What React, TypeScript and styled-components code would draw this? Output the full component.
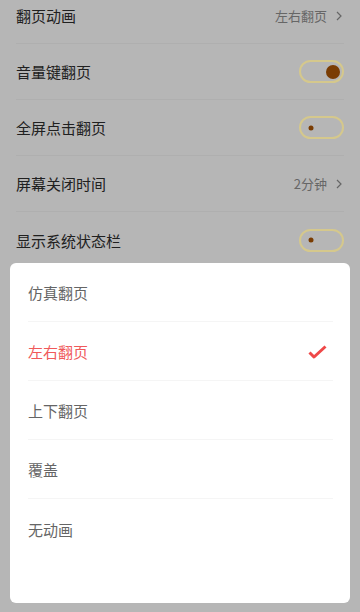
import React from "react";
import styled, { createGlobalStyle } from "styled-components";

const Global = createGlobalStyle`
  html, body { margin: 0; padding: 0; }
  body {
    width: 360px;
    height: 612px;
    overflow: hidden;
    background: #b6b6b6;
    font-family: "Noto Sans CJK SC", "Noto Sans", sans-serif;
  }
`;

const Screen = styled.div`
  position: relative;
  width: 360px;
  height: 612px;
  overflow: hidden;
  background: #b6b6b6;
`;

const List = styled.div`
  display: flex;
  flex-direction: column;
  margin-top: -12px;
  padding: 0 16px;
`;

const Row = styled.div<{ $last?: boolean }>`
  display: flex;
  align-items: center;
  justify-content: space-between;
  height: 56px;
  box-sizing: border-box;
  border-bottom: ${(p) => (p.$last ? "none" : "1px solid #afafaf")};
`;

const Label = styled.span`
  font-size: 15px;
  color: #202020;
  line-height: 1;
`;

const Value = styled.span`
  display: flex;
  align-items: center;
  gap: 9px;
  font-size: 13px;
  color: #666666;
  line-height: 1;
  margin-right: 2px;
`;

const Toggle = styled.div`
  position: relative;
  width: 45px;
  height: 23px;
  box-sizing: border-box;
  border: 2px solid #d5c88c;
  border-radius: 12px;
`;

const Knob = styled.div<{ $on?: boolean }>`
  position: absolute;
  top: 50%;
  transform: translate(-50%, -50%);
  left: ${(p) => (p.$on ? "32px" : "10px")};
  width: ${(p) => (p.$on ? "14px" : "5px")};
  height: ${(p) => (p.$on ? "14px" : "5px")};
  border-radius: 50%;
  background: #7a3c02;
`;

const Sheet = styled.div`
  position: absolute;
  left: 10px;
  right: 10px;
  top: 263px;
  bottom: 9px;
  background: #ffffff;
  border-radius: 6px;
  padding: 0 17px 0 18px;
  box-sizing: border-box;
  display: flex;
  flex-direction: column;
`;

const Option = styled.div<{ $active?: boolean; $last?: boolean }>`
  display: flex;
  align-items: center;
  justify-content: space-between;
  height: 59px;
  box-sizing: border-box;
  padding-top: 1px;
  border-bottom: ${(p) => (p.$last ? "none" : "1px solid #f5f5f5")};
  font-size: 15px;
  line-height: 1;
  color: ${(p) => (p.$active ? "#f0595a" : "#656565")};
`;

const Chevron = () => (
  <svg width="6" height="10" viewBox="0 0 6 10" fill="none">
    <path d="M1 1l4 4-4 4" stroke="#666666" strokeWidth="1.2" />
  </svg>
);

const Check = () => (
  <svg width="19" height="14" viewBox="0 0 19 14" fill="none" style={{ marginRight: 6 }}>
    <path d="M1.5 7.5l4.5 4.5L17.5 1.5" stroke="#ef4848" strokeWidth="3" strokeLinejoin="round" />
  </svg>
);

const options = ["仿真翻页", "左右翻页", "上下翻页", "覆盖", "无动画"];

export default function App() {
  return (
    <Screen>
      <Global />
      <List>
        <Row>
          <Label>翻页动画</Label>
          <Value>
            左右翻页 <Chevron />
          </Value>
        </Row>
        <Row>
          <Label>音量键翻页</Label>
          <Toggle>
            <Knob $on />
          </Toggle>
        </Row>
        <Row>
          <Label>全屏点击翻页</Label>
          <Toggle>
            <Knob />
          </Toggle>
        </Row>
        <Row>
          <Label>屏幕关闭时间</Label>
          <Value>
            2分钟 <Chevron />
          </Value>
        </Row>
        <Row $last>
          <Label>显示系统状态栏</Label>
          <Toggle>
            <Knob />
          </Toggle>
        </Row>
      </List>
      <Sheet>
        {options.map((o, i) => (
          <Option key={o} $active={i === 1} $last={i === options.length - 1}>
            {o}
            {i === 1 && <Check />}
          </Option>
        ))}
      </Sheet>
    </Screen>
  );
}
